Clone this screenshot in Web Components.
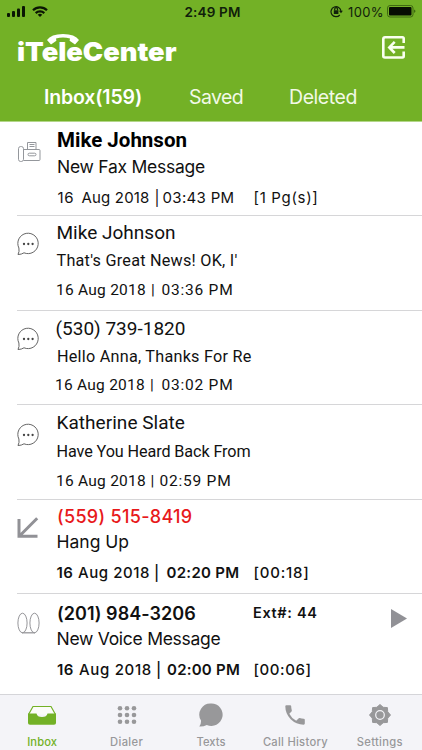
<!DOCTYPE html>
<html lang="en">
<head>
<meta charset="utf-8">
<title>iTeleCenter</title>
<style>
  html, body { margin: 0; height: 100%; }
  body { background: #fff; color: #111; font-family: Inter, "Liberation Sans", sans-serif; }
</style>
</head>
<body>
<tele-inbox></tele-inbox>

<template id="text-run">
  <style>
    :host { display: block; flex: none; }
    span { display: inline-block; white-space: pre; }
  </style>
  <span><slot></slot></span>
</template>

<template id="status-bar">
  <style>
    :host { display: grid; grid-template-columns: 1fr auto 1fr; height: 24px; color: #10200a; line-height: 24px; }
    .left { display: flex; gap: 7px; padding: 5px 0 0 7px; }
    .time { font-size: 13.5px; font-weight: 600; margin-left: 3px; }
    .right { display: flex; justify-content: flex-end; padding-right: 5px; font-size: 13px; }
    .right svg { margin-top: 4px; }
    .lock { margin-right: 5px; }
    .battery { margin-left: 3px; }
    svg { display: block; }
  </style>
  <div class="left">
    <svg width="18" height="13" fill="#0a1503"><rect y="8" width="3" height="4" rx="1"/><rect x="5" y="6" width="3" height="6" rx="1"/><rect x="10" y="3.500" width="3" height="8.500" rx="1"/><rect x="15" y="1" width="3" height="11" rx="1"/></svg>
    <svg width="16" height="13" fill="none" stroke="#0a1503" stroke-width="2.200"><path d="M1 5.200a10 10 0 0 1 14 0M3.700 8.100a6.200 6.200 0 0 1 8.600 0"/><path d="M8 12 5.700 9.800a3.300 3.300 0 0 1 4.600 0z" fill="#0a1503" stroke="none"/></svg>
  </div>
  <text-run class="time" w="56">2:49 PM</text-run>
  <div class="right">
    <svg class="lock" width="13" height="14" fill="none" stroke="#10200a" stroke-width="1.200"><path d="M9.800 11A5 5 0 1 1 11 7.200"/><path d="M8.900 6.700h4L11 9.200z" fill="#10200a" stroke="none"/><rect x="3.800" y="6.300" width="4.600" height="3.700" fill="#10200a" stroke="none"/><path d="M4.700 6.500V5a1.400 1.400 0 0 1 2.800 0v1.500"/></svg>
    <text-run w="36">100%</text-run>
    <svg class="battery" width="30" height="14"><rect x=".5" y="1.500" width="25.500" height="11.500" rx="2.500" fill="none" stroke="#3f6911"/><rect x="2" y="3" width="22.500" height="8.500" rx="1" fill="#060c02"/><path d="M27 5.500q3 1.700 0 3.500z" fill="#3f6911"/></svg>
  </div>
</template>

<template id="app-header">
  <style>
    :host { display: block; height: 122px; background: #73b126; border-bottom: 1px solid #b3d689; box-sizing: border-box; color: #fff; }
    .bar { display: flex; justify-content: space-between; height: 58px; padding: 6px 16px 0 17px; box-sizing: border-box; }
    .logo { display: block; }
    .exit { display: block; margin-top: 5px; }
    nav { display: flex; line-height: 31px; font-size: 19.500px; color: #f2f9e6; }
    nav text-run:nth-child(1) { margin-left: 44px; font-weight: 600; color: #fff; }
    nav text-run:nth-child(2) { margin-left: 47px; }
    nav text-run:nth-child(3) { margin-left: 46px; }
  </style>
  <status-bar></status-bar>
  <div class="bar">
    <svg class="logo" width="162" height="36" fill="#fff">
      <text x="0" y="30.500" font-family="Inter, sans-serif" font-weight="900" font-size="25.500" textLength="159.500" lengthAdjust="spacingAndGlyphs">iTeleCenter</text>
      <path d="M30 10Q34 4 46 4T62 10L58 14.500 52.600 10.800 53 8.600Q46 6.600 39 8.600L39.400 10.800 34 14.500z" stroke="#73b126" stroke-width="1.600" paint-order="stroke"/>
    </svg>
    <svg class="exit" width="25" height="26" fill="none" stroke="#fafff0" stroke-width="2.600"><path d="M22.700 8V3.500Q22.700 2.300 21.500 2.300H4Q2.300 2.300 2.300 4V21Q2.300 22.500 4 22.500H21.500Q22.700 22.500 22.700 21V16.500M23.500 12.400H8.500M13.700 6.800 8.300 12.400l5.400 5.600"/></svg>
  </div>
  <nav><text-run w="98">Inbox(159)</text-run><text-run w="54">Saved</text-run><text-run w="68">Deleted</text-run></nav>
</template>

<template id="message-row">
  <style>
    :host { display: grid; grid-template-columns: 39px 1fr auto; margin-left: 17px; box-sizing: border-box; height: 95px; border-bottom: 1px solid #d6d6d8; }
    .text { padding-top: var(--top, 6px); min-width: 0; }
    .name, .preview, .meta { display: flex; }
    .name { height: 24px; line-height: 24px; font-size: 19px; }
    .preview { height: 20px; line-height: 20px; font-size: 16.200px; margin-top: var(--gap1, 5px); }
    .meta { height: 18px; line-height: 18px; font-size: 15.500px; margin-top: var(--gap2, 10px); }
    :host([kind="text"]) { font-family: Roboto, sans-serif; }
    :host(:not([kind="text"])) .name { font-size: 18px; font-weight: 500; }
    :host(:not([kind="text"])) .preview { font-size: 17.500px; }
    :host([kind="fax"]) .name { font: 700 20.500px/24px Roboto, sans-serif; color: #000; }
    :host([kind="fax"]) .meta { font-size: 15px; }
    :host([kind="missed"]) .name { color: #e8191b; }
    :host([kind="voice"]) .name { font-weight: 600; }
    :host([kind="missed"]) .meta, :host([kind="voice"]) .meta { font-weight: 500; font-size: 15px; }
  </style>
  <slot name="icon"></slot>
  <div class="text">
    <div class="name"><slot name="name"></slot></div>
    <div class="preview"><slot name="preview"></slot></div>
    <div class="meta"><slot name="meta"></slot></div>
  </div>
  <slot name="action"></slot>
</template>

<template id="chat-icon">
  <style>
    :host { display: block; padding-top: var(--icon-top, 16px); }
    svg { display: block; }
  </style>
  <svg width="23" height="24"><path d="M1 22.500Q2.600 19.500 1.900 16A10.200 10.200 0 1 1 7 20.800Q4.500 22.500 1 22.500z" fill="none" stroke="#666"/><g fill="#444"><circle cx="7" cy="12" r="1.150"/><circle cx="11.300" cy="12" r="1.150"/><circle cx="15.600" cy="12" r="1.150"/></g></svg>
</template>

<template id="tab-item">
  <style>
    :host { display: flex; flex-direction: column; align-items: center; color: #98989a; font-size: 11.200px; font-weight: 500; }
    :host([active]) { color: #73b126; }
    .icon { height: 40px; display: flex; align-items: center; }
    .label { line-height: 15px; }
  </style>
  <div class="icon"><slot name="icon"></slot></div>
  <div class="label"><slot></slot></div>
</template>

<template id="tab-bar">
  <style>
    :host { display: grid; grid-template-columns: repeat(5, 1fr); box-sizing: border-box; height: 56px; background: #f4f4f8; border-top: 1px solid #d5d5d9; }
    svg { display: block; }
  </style>
  <tab-item active><svg slot="icon" width="30" height="22"><path d="M1.500 10.500 6 2.500H24l4.500 8" fill="#fbfcf8" stroke="#73b126" stroke-width="1.200"/><path d="M1 9.500H9.500Q10.200 13 15 13T20.500 9.500H29V19Q29 20.800 27 20.800H3Q1 20.800 1 19z" fill="#73b126"/></svg><text-run w="30">Inbox</text-run></tab-item>
  <tab-item><svg slot="icon" width="20" height="20" fill="#98989a"><circle cx="3" cy="3.200" r="2.300"/><circle cx="10" cy="3.200" r="2.300"/><circle cx="17" cy="3.200" r="2.300"/><circle cx="3" cy="10" r="2.300"/><circle cx="10" cy="10" r="2.300"/><circle cx="17" cy="10" r="2.300"/><circle cx="3" cy="16.800" r="2.300"/><circle cx="10" cy="16.800" r="2.300"/><circle cx="17" cy="16.800" r="2.300"/></svg><text-run w="33">Dialer</text-run></tab-item>
  <tab-item><svg slot="icon" width="24" height="24" fill="#98989a"><path d="M12.500.500a11.200 11.200 0 1 1-4.700 21.400Q4.500 23.700.300 23.500 2.200 21.300 2 17.500A11.200 11.200 0 0 1 12.500.500z"/></svg><text-run w="29">Texts</text-run></tab-item>
  <tab-item><svg slot="icon" width="20" height="20" fill="#98989a"><path d="M4.300 8.800a15.500 15.500 0 0 0 6.900 6.900l2.300-2.300q.5-.5 1.200-.3 1.900.6 4 .6 1.100 0 1.100 1.100v3.800q0 1.100-1.100 1.100A18.400 18.400 0 0 1 .300 1.300Q.300.200 1.400.200h3.700q1.100 0 1.100 1.100 0 2.100.6 4 .2.700-.3 1.200z"/></svg><text-run w="65">Call History</text-run></tab-item>
  <tab-item><svg slot="icon" width="24" height="24"><path d="M12 1.500 15.200 4.300 19.400 4.600 19.700 8.800 22.500 12 19.700 15.200 19.400 19.400 15.200 19.700 12 22.500 8.800 19.700 4.600 19.400 4.300 15.200 1.500 12 4.300 8.800 4.600 4.600 8.800 4.300z" fill="#98989a" stroke="#98989a" stroke-linejoin="round"/><circle cx="12" cy="12" r="4.300" fill="none" stroke="#f4f4f8" stroke-width="1.200"/></svg><text-run w="46">Settings</text-run></tab-item>
</template>

<template id="tele-inbox">
  <style>
    :host { display: grid; grid-template-rows: 122px 1fr 56px; height: 750px; width: 422px; overflow: hidden; }
    svg { display: block; }
    .fax { --top: 6px; --gap1: 5px; --gap2: 11.700px; height: 94px; }
    .r2 { --top: 5.200px; --gap1: 6px; --gap2: 10px; }
    .r3 { --top: 6px; --gap1: 5.900px; --gap2: 9px; height: 94px; }
    .r4 { --top: 6px; --gap1: 6.700px; --gap2: 10.800px; --icon-top: 18px; }
    .r5 { --top: 5.200px; --gap1: 2.700px; --gap2: 12.500px; height: 94px; }
    .r6 { --top: 8px; --gap1: 2.600px; --gap2: 12px; height: 100px; border: 0; }
    .ext { font-size: 14.500px; margin-top: -1.500px; }
    .strong { font-weight: 600; }
  </style>
  <app-header></app-header>
  <main>
    <message-row kind="fax" class="fax">
      <svg slot="icon" width="25" height="42" fill="none" stroke="#94979c"><g transform="translate(0 18)"><rect x="1.500" y="6.500" width="5" height="15" rx="2.200"/><path d="M6.500 9.500H22q1 0 1 1v9q0 1-1 1H6.500M10.500 9.500V2.500h8.500v7M12.500 4.500h5M12.500 6.500h5"/><rect x="11" y="13.200" width="8" height="2.600" rx="1.300"/></g></svg>
      <text-run slot="name" gap="1" w="130">Mike Johnson</text-run>
      <text-run slot="preview" gap="1" w="148">New Fax Message</text-run>
      <text-run slot="meta" gap="1.500" w="16.500">16</text-run>
      <text-run slot="meta" gap="7.500" w="68">Aug 2018</text-run>
      <text-run slot="meta" gap="5" w="4">|</text-run>
      <text-run slot="meta" gap="4" w="72">03:43 PM</text-run>
      <text-run slot="meta" gap="19" w="65">[1 Pg(s)]</text-run>
    </message-row>
    <message-row kind="text" class="r2">
      <chat-icon slot="icon"></chat-icon>
      <text-run slot="name" gap="0.500" w="119">Mike Johnson</text-run>
      <text-run slot="preview" gap="0.500" w="181">That's Great News! OK, I'</text-run>
      <text-run slot="meta" gap="0" w="90">16 Aug 2018</text-run>
      <text-run slot="meta" gap="5" w="4">|</text-run>
      <text-run slot="meta" gap="6.500" w="72">03:36 PM</text-run>
    </message-row>
    <message-row kind="text" class="r3">
      <chat-icon slot="icon"></chat-icon>
      <text-run slot="name" gap="-0.500" w="130">(530) 739-1820</text-run>
      <text-run slot="preview" gap="1" w="194.500">Hello Anna, Thanks For Re</text-run>
      <text-run slot="meta" gap="-1" w="90">16 Aug 2018</text-run>
      <text-run slot="meta" gap="5" w="4">|</text-run>
      <text-run slot="meta" gap="7.500" w="72">03:02 PM</text-run>
    </message-row>
    <message-row kind="text" class="r4">
      <chat-icon slot="icon"></chat-icon>
      <text-run slot="name" gap="0.500" w="128.500">Katherine Slate</text-run>
      <text-run slot="preview" gap="0.500" w="194">Have You Heard Back From</text-run>
      <text-run slot="meta" gap="0" w="90">16 Aug 2018</text-run>
      <text-run slot="meta" gap="4.500" w="4">|</text-run>
      <text-run slot="meta" gap="5" w="72">02:59 PM</text-run>
    </message-row>
    <message-row kind="missed" class="r5">
      <svg slot="icon" width="24" height="42" fill="none" stroke="#919196" stroke-width="3"><path d="M2 19V36.300H20.500M20.200 18.200 2.500 36"/></svg>
      <text-run slot="name" gap="1" w="135.500">(559) 515-8419</text-run>
      <text-run slot="preview" gap="0.500" w="72.500">Hang Up</text-run>
      <text-run slot="meta" class="strong" gap="0.500" w="17">16</text-run>
      <text-run slot="meta" gap="4.500" w="72">Aug 2018</text-run>
      <text-run slot="meta" gap="4" w="4">|</text-run>
      <text-run slot="meta" class="strong" gap="8.500" w="73">02:20 PM</text-run>
      <text-run slot="meta" gap="14" w="56">[00:18]</text-run>
    </message-row>
    <message-row kind="voice" class="r6">
      <svg slot="icon" width="24" height="42" fill="none" stroke="#96969a"><ellipse cx="5.500" cy="29" rx="4.600" ry="9.800"/><ellipse cx="17.500" cy="29" rx="4.600" ry="9.800"/><path d="M5 38.800H18" stroke-width="1.300"/></svg>
      <text-run slot="name" gap="1" w="138.500">(201) 984-3206</text-run>
      <text-run slot="name" class="ext" gap="57.500" w="64.500">Ext#: 44</text-run>
      <text-run slot="preview" gap="0.500" w="164">New Voice Message</text-run>
      <text-run slot="meta" class="strong" gap="1" w="17">16</text-run>
      <text-run slot="meta" gap="5" w="73">Aug 2018</text-run>
      <text-run slot="meta" gap="4" w="4">|</text-run>
      <text-run slot="meta" class="strong" gap="7" w="73">02:00 PM</text-run>
      <text-run slot="meta" gap="13.500" w="58">[00:06]</text-run>
      <svg slot="action" width="31" height="36"><path d="M0 15 16 24.500 0 34z" fill="#919196"/></svg>
    </message-row>
  </main>
  <tab-bar></tab-bar>
</template>

<script>
class TeleElement extends HTMLElement {
  constructor() {
    super();
    this.attachShadow({ mode: 'open' });
    const template = document.getElementById(this.localName);
    this.shadowRoot.appendChild(template.content.cloneNode(true));
  }
}

// A run of text tracked out (or in) to a given width.
class TextRun extends TeleElement {
  connectedCallback() {
    if (this.hasAttribute('gap')) {
      this.style.marginLeft = `${this.getAttribute('gap')}px`;
    }
    requestAnimationFrame(() => this._fit());
  }

  _fit() {
    const width = Number(this.getAttribute('w'));
    const natural = this.shadowRoot.querySelector('span').getBoundingClientRect().width;
    this.style.letterSpacing = `${(width - natural) / this.textContent.length}px`;
    this.style.width = `${width}px`;
  }
}

customElements.define('text-run', TextRun);
['status-bar', 'app-header', 'message-row', 'chat-icon', 'tab-item', 'tab-bar', 'tele-inbox'].forEach((name) => {
  customElements.define(name, class extends TeleElement {});
});
</script>
</body>
</html>
